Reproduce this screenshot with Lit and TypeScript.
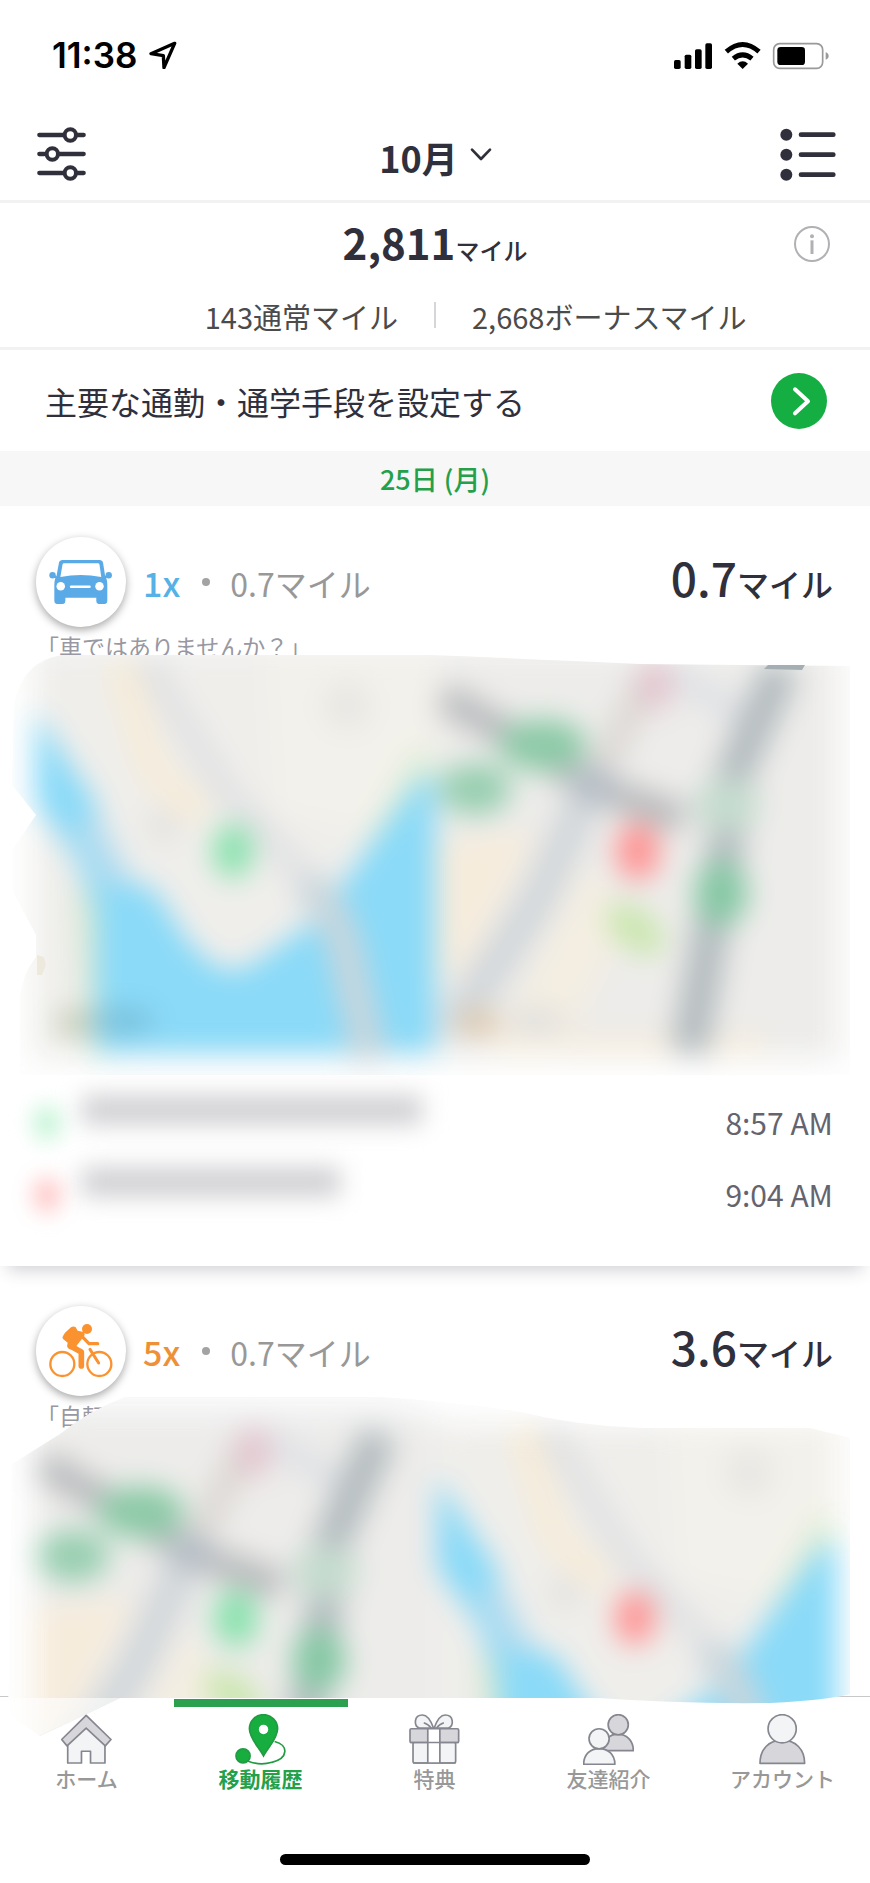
import { LitElement, html, svg, css } from 'lit';

// transport icons
const carIcon = html`
  <svg class="vehicle" viewBox="0 0 180 126" aria-hidden="true">
    <path d="M10 43L26 52M168 43L152 52" stroke="#5aaae8" stroke-width="6" />
    <circle cx="10" cy="43" r="9" fill="#5aaae8" />
    <circle cx="168" cy="43" r="9" fill="#5aaae8" />
    <path fill="#5aaae8" d="M38 0H142Q150 0 152 8L158 46Q164 54 164 70V115Q164 124 155 124H142Q133 124 133 115V106H46V115Q46 124 37 124H24Q15 124 15 115V70Q15 54 21 46L28 8Q30 0 38 0Z" />
    <path fill="#fff" d="M42 9H138Q141 9 142 13L147 48Q89 36 32 48L38 13Q39 9 42 9Z" />
    <circle cx="33" cy="74" r="12" fill="#fff" />
    <circle cx="142" cy="74" r="12" fill="#fff" />
    <path d="M62 75H114" stroke="#fff" stroke-width="7" stroke-linecap="round" />
  </svg>`;

const bikeIcon = html`
  <svg class="vehicle" viewBox="-2 0 192 162" aria-hidden="true">
    <g fill="none" stroke="#fb9230" stroke-linecap="round" stroke-linejoin="round">
      <circle cx="38" cy="120" r="36" stroke-width="7" />
      <circle cx="149" cy="120" r="36" stroke-width="7" />
      <path d="M121 76L147 117" stroke-width="9" />
      <path d="M94 34L118 59H144" stroke-width="10" />
      <path d="M62 66L95 84V126" stroke-width="17" />
    </g>
    <circle cx="112" cy="15" r="15" fill="#fb9230" />
    <path fill="#fb9230" d="M64 10Q72 5 78 10L84 20L102 24Q108 30 102 38L80 66L88 74L60 76Q50 70 54 56L41 46Q36 42 40 36L46 26Z" />
  </svg>`;

// tab bar icons
const homeIcon = html`
  <svg viewBox="0 0 152 152" aria-hidden="true">
    <path class="light" d="M20 80V146H61V111H88V146H131V80L75 36Z" />
    <path class="shade" d="M75 4L149 76L132 95L75 42L18 95L2 76Z" />
  </svg>`;

const tripIcon = html`
  <svg viewBox="0 0 152 152" aria-hidden="true">
    <path d="M118 82C160 92 160 132 110 144C86 151 60 149 38 140" fill="none" stroke="#219b43" stroke-width="5" />
    <path d="M85 125C70 98 43 72 43 44A42 42 0 0 1 127 44C127 72 100 98 85 125Z" fill="#17ad3f" stroke="#219b43" stroke-width="5" />
    <circle cx="85" cy="46" r="14" fill="#fff" />
    <circle cx="24" cy="125" r="21" fill="#17ad3f" stroke="#219b43" stroke-width="5" />
  </svg>`;

const giftIcon = html`
  <svg viewBox="0 0 152 152" aria-hidden="true">
    <rect class="light" x="12" y="84" width="127" height="62" rx="5" />
    <rect class="shade" x="3" y="44" width="145" height="41" rx="4" />
    <rect x="56" y="44" width="36" height="102" fill="#fff" />
    <path class="line" d="M56 44V146M92 44V146M3 85H148M12 146H139M56 44H92" />
    <path class="light" d="M73 42C66 22 56 3 40 3C14 3 14 34 30 42Z" />
    <path class="light" d="M75 42C82 22 92 3 108 3C134 3 134 34 118 42Z" />
    <path class="line" d="M66 42Q58 30 44 26M82 42Q90 30 104 26" />
  </svg>`;

const friendsIcon = html`
  <svg viewBox="0 0 152 152" aria-hidden="true">
    <path class="shade" d="M60 109C60 76 80 60 104 60S150 78 150 109Z" />
    <circle class="shade" cx="105" cy="32" r="30" />
    <path class="light" d="M2 150C2 120 22 103 48 103S95 120 95 150Z" />
    <circle class="light" cx="48" cy="74" r="30" />
  </svg>`;

const accountIcon = html`
  <svg viewBox="0 0 152 152" aria-hidden="true">
    <path class="shade" d="M9 147C9 105 35 78 75 78S142 105 142 147Z" />
    <circle class="light" cx="75" cy="44" r="42" />
  </svg>`;

// 400 x 396 map tiles, shared by both trips
const riverTile = (pin: string) => svg`
  <rect width="400" height="396" fill="#efeeeb" />
  <path d="M230 -5H400V120L330 170L240 150Z" fill="#f3f1eb" />
  <path d="M84 0L118 110L168 156" stroke="#f6ecd9" stroke-width="30" fill="none" />
  <path d="M110 0L190 130L245 190L285 235" stroke="#e0e1e3" stroke-width="24" fill="none" />
  <circle cx="312" cy="45" r="24" fill="#e8e7e3" />
  <circle cx="128" cy="165" r="16" fill="#e3e2e0" />
  <path d="M392 92L340 190" stroke="#dfeed6" stroke-width="26" />
  <path d="M54 225L66 396" stroke="#d8e8d1" stroke-width="28" />
  <path fill="#8adaf8" d="M0 50L20 80L60 140L74 192L94 220L120 229L154 282L184 308H210L276 262L309 221L353 160L386 116H400V392H62V250L40 196L0 140Z" />
  <path d="M50 160L82 224" stroke="#b2dcf0" stroke-width="30" />
  <path d="M270 222Q304 250 312 296L336 400" stroke="#c9d6dc" stroke-width="34" fill="none" />
  <ellipse cx="42" cy="362" rx="22" ry="12" fill="#c3c9b2" />
  <ellipse cx="88" cy="360" rx="32" ry="12" fill="#78bdd8" />
  <ellipse cx="198" cy="190" rx="20" ry="27" fill=${pin} />`;

const stationTile = (pin: string) => svg`
  <rect width="400" height="396" fill="#edecea" />
  <path d="M0 180L100 170L30 300L0 320Z" fill="#f6ecdc" />
  <path d="M150 200L190 260L120 396H50L90 320Z" fill="#f4eee2" />
  <path d="M130 376H330V392H130Z" fill="#f6ecdb" />
  <path d="M232 10L330 70" stroke="#dfe1e5" stroke-width="24" />
  <path d="M215 10L152 130" stroke="#dbd7d3" stroke-width="26" />
  <ellipse cx="218" cy="24" rx="18" ry="26" fill="#e3c6cf" />
  <path d="M6 36L90 84L157 126L246 158" stroke="#b9bbbd" stroke-width="30" fill="none" />
  <path d="M156 120L100 240L14 370" stroke="#d2d7da" stroke-width="36" fill="none" />
  <circle cx="156" cy="124" r="20" fill="#b4bdc6" />
  <ellipse cx="106" cy="84" rx="44" ry="26" fill="#8ccaa7" />
  <ellipse cx="38" cy="128" rx="36" ry="26" fill="#98cfb1" />
  <path d="M345 6L297 112L288 190L252 392" stroke="#b4bcbf" stroke-width="37" fill="none" />
  <ellipse cx="290" cy="144" rx="33" ry="27" fill="#c5dccf" />
  <ellipse cx="284" cy="232" rx="27" ry="33" fill="#86c8a5" />
  <ellipse cx="198" cy="268" rx="34" ry="20" fill="#cbe7b0" transform="rotate(38 198 268)" />
  <ellipse cx="42" cy="362" rx="22" ry="12" fill="#dfc7a8" />
  <ellipse cx="100" cy="360" rx="28" ry="12" fill="#dedede" />
  <ellipse cx="201" cy="190" rx="22" ry="29" fill=${pin} />`;

const GREEN_PIN = '#88e2ad';
const RED_PIN = '#ff9494';

const carMap = html`
  <svg class="map" viewBox="0 0 870 442" role="img" aria-label="地図">
    <defs>
      <filter id="soft" x="-10%" y="-10%" width="120%" height="120%" color-interpolation-filters="sRGB"><feGaussianBlur stdDeviation="14" /></filter>
      <clipPath id="edge">
        <path d="M14 60Q22 16 62 10L430 10Q530 14 640 19L850 21V430H20L20 350Q24 326 36 312V290L12 245V205L36 170L12 140Z" />
      </clipPath>
    </defs>
    <g clip-path="url(#edge)">
      <rect width="870" height="442" fill="#fefefe" />
      <g filter="url(#soft)">
        <rect x="36" y="0" width="802" height="412" fill="#efefee" />
        <g transform="translate(35 16)">${riverTile(GREEN_PIN)}</g>
        <g transform="translate(437 16)">${stationTile(RED_PIN)}</g>
      </g>
    </g>
    <path d="M768 20H805L802 25L764 24Z" fill="#a5afb3" />
    <path d="M37 310L44 312L46 320L42 330H37Z" fill="#edeadd" />
  </svg>`;

const bikeMap = html`
  <svg class="map" viewBox="0 0 870 282" role="img" aria-label="地図">
    <defs>
      <filter id="soft" x="-10%" y="-10%" width="120%" height="120%" color-interpolation-filters="sRGB"><feGaussianBlur stdDeviation="14" /></filter>
      <clipPath id="edge">
        <path d="M12 50L60 20Q90 -4 125 -17H380Q460 -12 520 -2Q580 12 640 14H810L850 24V280Q830 286 770 289Q680 290 600 284H120L70 308L40 322L8 300Z" />
      </clipPath>
    </defs>
    <g clip-path="url(#edge)">
      <rect y="-20" width="870" height="345" fill="#fefefe" />
      <g filter="url(#soft)">
        <path d="M40 30L60 -10H400L450 10H836V300H36Z" fill="#efefef" />
        <g transform="translate(35 14)">${stationTile(GREEN_PIN)}</g>
        <g transform="translate(437 14)">${riverTile(RED_PIN)}</g>
      </g>
    </g>
    <path d="M0 284H120L70 308L20 330H0Z" fill="#fff" fill-opacity="0.6" />
  </svg>`;

class TripCard extends LitElement {
  declare trip: any;

  static get properties() {
    return {
      trip: { type: Object },
    };
  }

  static styles = css`
    :host {
      display: block;
      padding-top: 31px;
    }
    :host([closed]) {
      padding-bottom: 35px;
      box-shadow: 0 12px 16px -8px rgba(60, 60, 80, 0.24);
    }
    .head {
      display: flex;
      align-items: center;
      padding: 0 37px 0 36px;
    }
    .badge {
      display: flex;
      align-items: center;
      justify-content: center;
      width: 90px;
      height: 90px;
      border-radius: 50%;
      background: #fff;
      box-shadow: 0 3px 8px rgba(0, 0, 0, 0.35);
    }
    .vehicle {
      width: 64px;
    }
    .rate {
      margin-left: 17px;
      padding-top: 2px;
      font-size: 34px;
      font-weight: 500;
      line-height: 40px;
    }
    .car {
      color: #55b1e6;
    }
    .bike {
      color: #ee9038;
    }
    .dot {
      width: 8px;
      height: 8px;
      margin: 0 20px 0 22px;
      border-radius: 50%;
      background: #a3a3a3;
    }
    .base {
      padding-top: 2px;
      color: #989898;
      font-size: 32px;
      line-height: 40px;
    }
    .total {
      margin-left: auto;
      padding-bottom: 5px;
      color: #2f303b;
      font-size: 46px;
      font-weight: 500;
      line-height: 60px;
    }
    .total small {
      font-size: 32px;
    }
    .note {
      margin: 5px 36px 0;
      padding-bottom: 2px;
      color: #9898a2;
      font-size: 23px;
      line-height: 28px;
      white-space: nowrap;
    }
    .map {
      display: block;
      position: relative;
      width: 100%;
      height: auto;
      margin-top: -17px;
      overflow: visible;
    }
    .stops {
      margin: 0;
      padding: 0;
      list-style: none;
    }
    .stop {
      display: flex;
      align-items: center;
      height: 72px;
      padding: 0 37px 0 34px;
    }
    .pin {
      width: 26px;
      height: 34px;
      border-radius: 50%;
      filter: blur(11px);
    }
    .from {
      background: #bdf3d1;
    }
    .to {
      background: #ffc0c0;
    }
    .place {
      height: 28px;
      margin: 0 auto 26px 22px;
      background: #cdcdd1;
      filter: blur(12px);
    }
    time {
      padding-bottom: 2px;
      color: #64646e;
      font-size: 30px;
      line-height: 40px;
    }
  `;

  render() {
    const t = this.trip;
    return html`
      <div class="head">
        <span class="badge">${t.icon}</span>
        <span class="rate ${t.kind}">${t.rate}</span>
        <span class="dot"></span>
        <span class="base">${t.base}マイル</span>
        <span class="total">${t.total}<small>マイル</small></span>
      </div>
      <p class="note">${t.note}</p>
      ${t.map}
      ${t.stops.length ? html`
        <ul class="stops">
          ${t.stops.map((s: any) => html`
            <li class="stop">
              <span class="pin ${s.kind}"></span>
              <span class="place" style="width: ${s.width}px"></span>
              <time>${s.time}</time>
            </li>`)}
        </ul>` : ''}
    `;
  }
}
customElements.define('trip-card', TripCard);

class AppRoot extends LitElement {
  declare activeTab: number;

  static get properties() {
    return {
      activeTab: { type: Number },
    };
  }

  constructor() {
    super();
    this.activeTab = 1;
    // @ts-ignore
    this.tabs = [
      { label: 'ホーム', icon: homeIcon },
      { label: '移動履歴', icon: tripIcon },
      { label: '特典', icon: giftIcon },
      { label: '友達紹介', icon: friendsIcon },
      { label: 'アカウント', icon: accountIcon },
    ];
    // @ts-ignore
    this.trips = [
      {
        kind: 'car', icon: carIcon, rate: '1x', base: '0.7', total: '0.7',
        note: '「車ではありませんか？」', map: carMap,
        stops: [
          { kind: 'from', width: 340, time: '8:57 AM' },
          { kind: 'to', width: 258, time: '9:04 AM' },
        ],
      },
      {
        kind: 'bike', icon: bikeIcon, rate: '5x', base: '0.7', total: '3.6',
        note: '「自転車ではありませんか？」', map: bikeMap, stops: [],
      },
    ];
  }

  static styles = css`
    :host {
      display: block;
      overflow: hidden;
      background: #fff;
      color: #2f303b;
      font-family: 'Noto Sans CJK JP', sans-serif;
    }
    button {
      padding: 0;
      border: 0;
      background: none;
      color: inherit;
      font: inherit;
      cursor: pointer;
    }
    svg {
      display: block;
    }
    .status {
      display: flex;
      align-items: center;
      height: 110px;
      padding: 0 41px 0 52px;
      color: #000;
      font-family: Inter, sans-serif;
      font-size: 35px;
      font-weight: 600;
    }
    .locate {
      width: 28px;
      margin-left: 12px;
    }
    .signals {
      width: 155px;
      margin-left: auto;
    }
    .bar {
      display: grid;
      grid-template-columns: 1fr auto 1fr;
      align-items: center;
      height: 90px;
      padding: 0 34px 0 37px;
      border-bottom: 3px solid #f2f2f2;
    }
    .filter {
      justify-self: start;
      width: 49px;
      padding-bottom: 3px;
    }
    .month {
      display: flex;
      align-items: center;
      gap: 12px;
      padding: 4px 2px 0 0;
      font-size: 36px;
      font-weight: 700;
      line-height: 56px;
    }
    .month svg {
      width: 22px;
      margin-bottom: 4px;
    }
    .list {
      justify-self: end;
      width: 56px;
    }
    .summary {
      border-bottom: 3px solid #f2f2f2;
    }
    .miles {
      display: grid;
      grid-template-columns: 1fr auto 1fr;
      align-items: center;
      height: 82px;
      padding: 0 39px;
    }
    .miles strong {
      grid-column: 2;
      padding-top: 4px;
      font-size: 42px;
      line-height: 60px;
    }
    .miles small {
      font-size: 24px;
      font-weight: 500;
    }
    .info {
      justify-self: end;
      width: 38px;
    }
    .split {
      display: grid;
      grid-template-columns: 1fr 2px 1fr;
      align-items: center;
      gap: 36px;
      height: 62px;
      color: #4b4b4b;
      font-size: 29px;
      line-height: 62px;
    }
    .split span:first-child {
      text-align: right;
    }
    .rule {
      height: 26px;
      margin-bottom: 2px;
      background: #d6d6d8;
    }
    .commute {
      display: flex;
      align-items: center;
      justify-content: space-between;
      height: 101px;
      padding: 0 43px 0 45px;
      color: inherit;
      font-size: 32px;
      text-decoration: none;
    }
    .commute svg {
      width: 56px;
    }
    .date {
      margin: 0;
      background: #f7f7f7;
      color: #24a04a;
      font-size: 27px;
      font-weight: 500;
      line-height: 55px;
      text-align: center;
    }
    .trips {
      display: grid;
      gap: 9px;
    }
    .tabs {
      padding-bottom: 18px;
      border-top: 1px solid #c8c8c8;
    }
    .tabs ul {
      display: grid;
      grid-template-columns: repeat(5, 1fr);
      margin: 0;
      padding: 2px 0 0;
      list-style: none;
    }
    .tabs a {
      display: flex;
      position: relative;
      flex-direction: column;
      align-items: center;
      border-top: 8px solid transparent;
      padding: 7px 1px 0 0;
      color: #989898;
      font-size: 21px;
      font-weight: 500;
      line-height: 26px;
      text-decoration: none;
    }
    .tabs a.active {
      border-top-color: #2ba150;
      color: #24a04a;
      font-weight: 700;
    }
    .tabs svg {
      width: 51px;
    }
    .light {
      fill: #f2f4f5;
      stroke: #85868f;
      stroke-width: 5;
      stroke-linejoin: round;
    }
    .shade {
      fill: #d6d6db;
      stroke: #85868f;
      stroke-width: 5;
      stroke-linejoin: round;
    }
    .line {
      fill: none;
      stroke: #85868f;
      stroke-width: 5;
    }
    .grip {
      width: 310px;
      height: 11px;
      margin: 63px auto 0;
      border-radius: 6px;
      background: #000;
    }
  `;

  render() {
    return html`
      <div class="status">
        <span>11:38</span>
        <svg class="locate" viewBox="0 0 84 86" aria-hidden="true">
          <path d="M77 7L6 38L43 44L45 80Z" fill="none" stroke="#000" stroke-width="10" stroke-linejoin="round" />
        </svg>
        <svg class="signals" viewBox="0 0 465 87" aria-hidden="true">
          <rect x="0" y="57" width="20" height="27" rx="5" />
          <rect x="32" y="41" width="20" height="43" rx="5" />
          <rect x="63" y="25" width="20" height="59" rx="5" />
          <rect x="94" y="7" width="20" height="77" rx="5" />
          <path d="M157 32Q206 -11 255 32M178 53Q206 30 234 53" fill="none" stroke="#000" stroke-width="15" />
          <path d="M190 68Q206 54 222 68L206 84Z" />
          <rect x="299" y="8" width="147" height="74" rx="18" fill="none" stroke="#999" stroke-width="5" />
          <rect x="310" y="18" width="83" height="54" rx="10" />
          <path d="M455 34Q464 37 464 45T455 56Z" fill="#999" />
        </svg>
      </div>

      <header class="bar">
        <button class="filter" aria-label="絞り込み">
          <svg viewBox="0 0 147 162">
            <g fill="none" stroke="#2f303b" stroke-width="13" stroke-linecap="round">
              <path d="M7 24H78M122 24H140M7 81H22M68 81H140M7 138H78M122 138H140" />
              <circle cx="100" cy="24" r="17" stroke-width="12" />
              <circle cx="46" cy="81" r="17" stroke-width="12" />
              <circle cx="100" cy="138" r="17" stroke-width="12" />
            </g>
          </svg>
        </button>
        <button class="month">
          10月
          <svg viewBox="0 0 66 46">
            <path d="M6 8L33 36L60 8" fill="none" stroke="#2f303b" stroke-width="8" stroke-linecap="round" stroke-linejoin="round" />
          </svg>
        </button>
        <button class="list" aria-label="一覧">
          <svg viewBox="0 0 168 160">
            <g fill="#2f303b">
              <circle cx="19" cy="20" r="18" />
              <circle cx="19" cy="80" r="18" />
              <circle cx="19" cy="140" r="18" />
              <path d="M63 20H160M63 80H160M63 140H160" stroke="#2f303b" stroke-width="14" stroke-linecap="round" />
            </g>
          </svg>
        </button>
      </header>

      <section class="summary">
        <div class="miles">
          <strong>2,811<small>マイル</small></strong>
          <button class="info" aria-label="マイルについて">
            <svg viewBox="0 0 114 114">
              <circle cx="57" cy="57" r="51" fill="none" stroke="#b1b1b5" stroke-width="6" />
              <circle cx="57" cy="34" r="6" fill="#b1b1b5" />
              <path d="M57 46V87" stroke="#b1b1b5" stroke-width="9" />
            </svg>
          </button>
        </div>
        <div class="split">
          <span>143通常マイル</span>
          <i class="rule"></i>
          <span>2,668ボーナスマイル</span>
        </div>
      </section>

      <a class="commute" href="#commute">
        主要な通勤・通学手段を設定する
        <svg viewBox="0 0 168 168" aria-hidden="true">
          <circle cx="84" cy="84" r="84" fill="#14ae42" />
          <path d="M72 49L111 85L72 121" fill="none" stroke="#fff" stroke-width="12" stroke-linecap="round" stroke-linejoin="round" />
        </svg>
      </a>

      <h2 class="date">25日 (月)</h2>
      <main class="trips">
        ${(this as any).trips.map((trip: any) => html`
          <trip-card .trip=${trip} ?closed=${trip.stops.length > 0}></trip-card>
        `)}
      </main>

      <nav class="tabs">
        <ul>
          ${(this as any).tabs.map((tab: any, i: number) => html`
            <li>
              <a href="#" class=${i === this.activeTab ? 'active' : ''}
                @click=${() => { this.activeTab = i; }}>${tab.icon}${tab.label}</a>
            </li>`)}
        </ul>
        <div class="grip"></div>
      </nav>
    `;
  }
}
customElements.define('app-root', AppRoot);
